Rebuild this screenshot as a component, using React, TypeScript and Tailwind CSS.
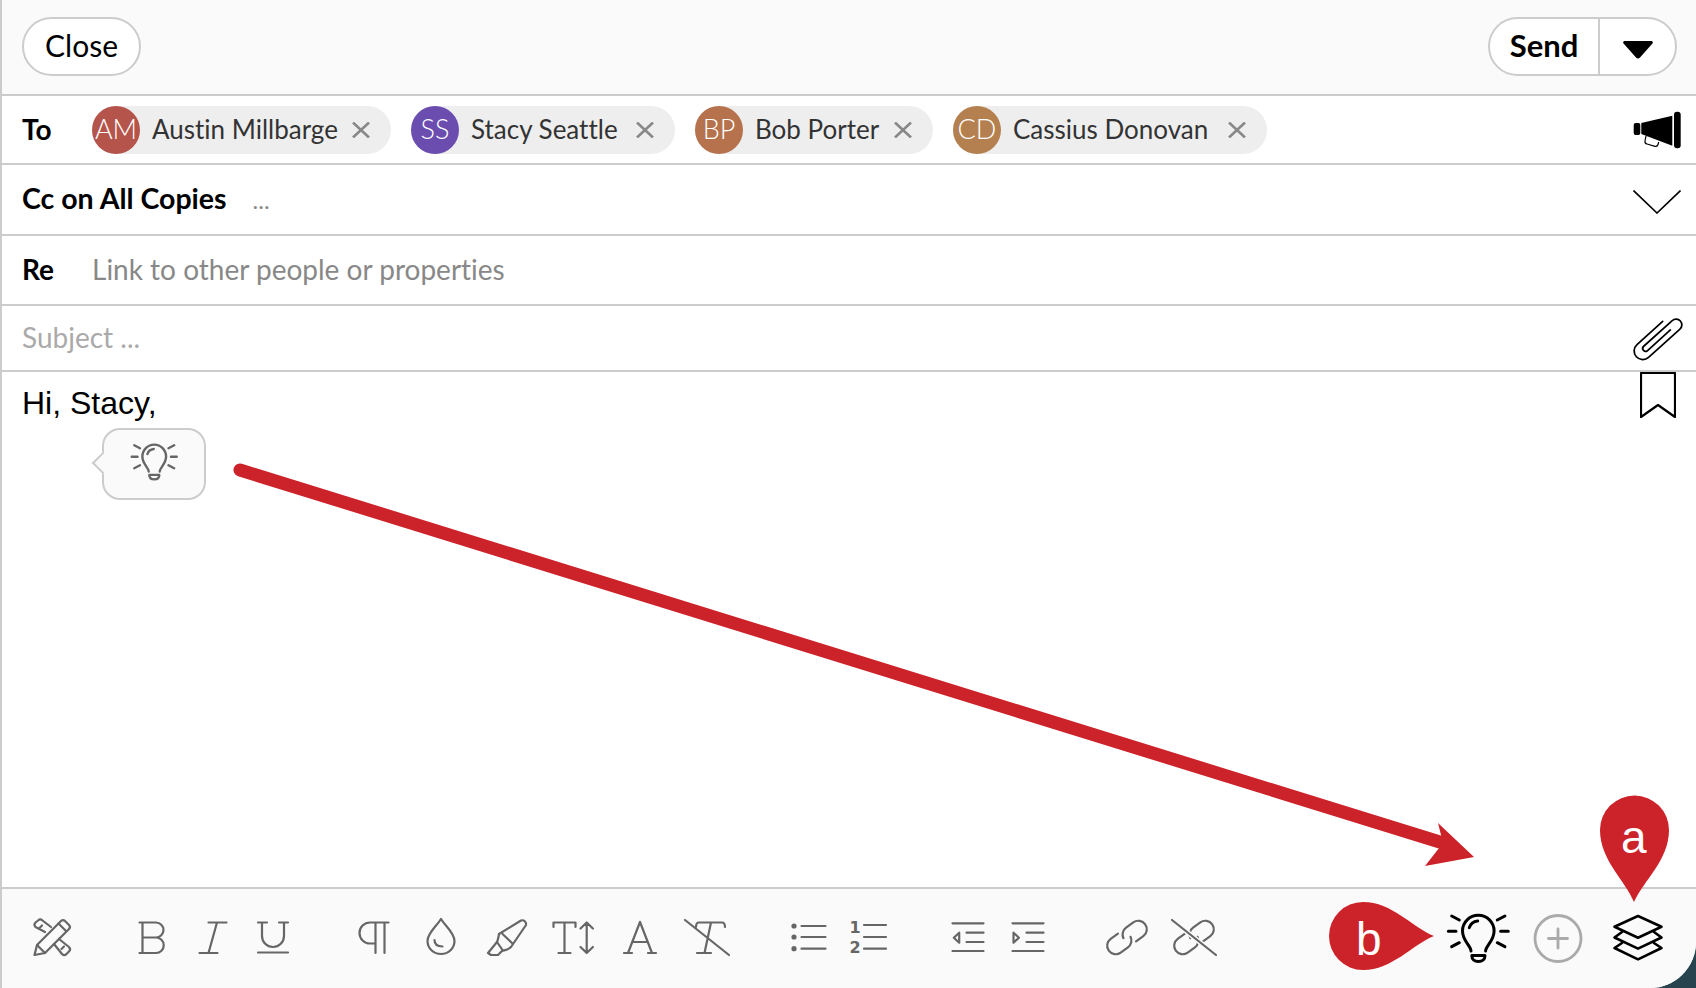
import type { ReactNode } from 'react';

const people = [
    { initials: 'AM', name: 'Austin Millbarge', color: 'bg-[#b5544b]', chip: 'w-[299px] mr-[20px]' },
    { initials: 'SS', name: 'Stacy Seattle', color: 'bg-[#6b4db0]', chip: 'w-[264px] mr-[20px]' },
    { initials: 'BP', name: 'Bob Porter', color: 'bg-[#b5724c]', chip: 'w-[238px] mr-[20px]' },
    { initials: 'CD', name: 'Cassius Donovan', color: 'bg-[#b5804f]', chip: 'w-[314px]' },
];

function Icon({ children, className = 'text-[#666666]', weight = '2.200' }: { children: ReactNode; className?: string; weight?: string }) {
    return (
        <svg
            viewBox="0 0 48 48"
            fill="none"
            stroke="currentColor"
            strokeWidth={weight}
            strokeLinecap="round"
            strokeLinejoin="round"
            className={`w-12 h-12 shrink-0 overflow-visible ${className}`}
        >
            {children}
        </svg>
    );
}

function Bulb({ className, weight = '3' }: { className: string; weight?: string }) {
    return (
        <svg
            viewBox="0 0 48 48"
            fill="none"
            stroke="currentColor"
            strokeWidth={weight}
            strokeLinecap="round"
            strokeLinejoin="round"
            className={`shrink-0 overflow-visible ${className}`}
        >
            <path d="M17 38c0-5-8.500-10-8.500-20a15.800 15.800 0 0 1 31.600 0c0 10-8.500 15-8.500 20" />
            <path d="M15.300 14.700c1-3.500 4.200-6.200 8.400-6.700" />
            <path d="M17.800 42.500h13.200c0 3.500-2.500 6-6.600 6s-6.600-2.500-6.600-6z" />
            <path d="M-5.700 18.300H2M-2.300 3l7.600 4M-2.300 33.700l7.600-4M54.300 18.300H46.600M50.900 3l-7.600 4M50.900 33.700l-7.600-4" />
        </svg>
    );
}

function LinkShape() {
    return (
        <g transform="rotate(-36 24 24.500)">
            <path d="M19 16H10a8.500 8.500 0 0 0 0 17h9a8.500 8.500 0 0 0 8.300-7" />
            <path d="M20.700 23a8.500 8.500 0 0 1 8.300-7h9a8.500 8.500 0 0 1 0 17h-9" />
        </g>
    );
}

export default function App() {
    return (
        <div className="relative w-[1696px] h-[988px] overflow-hidden bg-[#27434e] font-['Lato',sans-serif] [font-variant-ligatures:none] text-black">
            <div className="flex flex-col h-full bg-white border-l-2 border-[#cccccc] rounded-br-[46px] overflow-hidden">
                {/* top bar */}
                <div className="flex items-center justify-between h-[96px] shrink-0 pl-[20px] pr-[19px] pb-[2px] bg-[#fafafa] border-b-2 border-[#cccccc]">
                    <button className="w-[119px] h-[59px] pb-[2px] rounded-full bg-white border-2 border-[#cccccc] text-[30px]">
                        Close
                    </button>
                    <div className="flex h-[59px] w-[189px] rounded-full bg-white border-2 border-[#cccccc]">
                        <div className="flex items-center justify-center w-[110px] pb-[2px] border-r-2 border-[#cccccc] text-[31px] font-bold">
                            Send
                        </div>
                        <div className="flex flex-1 items-center justify-center pt-[8px]">
                            <svg viewBox="0 0 30 18" className="w-[30px] h-[18px]" fill="#000000">
                                <path d="M2 0h26c2 0 2.500 1.800 1 3L17 16.500c-1.200 1.300-2.800 1.300-4 0L1 3C-.5 1.800 0 0 2 0z" />
                            </svg>
                        </div>
                    </div>
                </div>

                {/* To */}
                <div className="flex items-center h-[69px] shrink-0 pl-[20px] pr-[15px] border-b-2 border-[#cccccc]">
                    <div className="w-[70px] pb-[2px] text-[28px] font-bold">To</div>
                    <div className="flex flex-1 items-center">
                        {people.map((p) => (
                            <div key={p.initials} className={`flex items-center h-[48px] rounded-full bg-[#eeeeee] ${p.chip}`}>
                                <div className={`flex items-center justify-center w-[48px] h-[48px] rounded-full text-white font-light text-[27px] ${p.color}`}>
                                    {p.initials}
                                </div>
                                <span className="ml-[12px] flex-1 text-[26px] text-[#333333] whitespace-nowrap">{p.name}</span>
                                <svg viewBox="0 0 18 16" className="w-[18px] h-[16px] mr-[21px]" fill="none" stroke="#888888" strokeWidth="2.600">
                                    <path d="M1 .5l16 15M17 .5l-16 15" />
                                </svg>
                            </div>
                        ))}
                    </div>
                    <svg viewBox="0 0 48 38" className="w-[48px] h-[38px] shrink-0" fill="#000000">
                        <rect x="0.700" y="12" width="6.600" height="12" rx="2" />
                        <path d="M8.300 12L39.300 4.700V34.700L8.300 23Z" />
                        <rect x="41" y="0.700" width="6.700" height="36.600" rx="3" />
                        <path d="M13 25l-1 5c-.4 2 .6 2.600 2 3l8 2.300c1.700.4 2.600-.3 3-1.800l.7-2.500" fill="none" stroke="#000000" strokeWidth="1.200" />
                    </svg>
                </div>

                {/* Cc */}
                <div className="flex items-center h-[71px] shrink-0 pl-[20px] pr-[15px] border-b-2 border-[#cccccc]">
                    <div className="pb-[2px] text-[28.500px] font-bold">Cc on All Copies</div>
                    <div className="flex-1 ml-[26px] text-[24px] text-[#888888]">...</div>
                    <svg viewBox="0 0 48 24" className="w-[48px] h-[24px] mt-[4px]" fill="none" stroke="#000000" strokeWidth="1.600">
                        <path d="M.5.5L24 23 47.500.5" />
                    </svg>
                </div>

                {/* Re */}
                <div className="flex items-center h-[70px] shrink-0 pl-[20px] border-b-2 border-[#cccccc]">
                    <div className="w-[70px] pb-[2px] text-[28px] font-bold">Re</div>
                    <div className="pb-[2px] text-[28px] text-[#888888]">Link to other people or properties</div>
                </div>

                {/* Subject */}
                <div className="flex items-center h-[66px] shrink-0 pl-[20px] pr-[14px] border-b-2 border-[#cccccc]">
                    <div className="flex-1 pb-[2px] text-[28px] text-[#aaaaaa]">Subject ...</div>
                    <svg viewBox="0 0 48 44" className="w-[48px] h-[44px] overflow-visible" fill="none" stroke="#000000" strokeWidth="1.800" strokeLinecap="round">
                        <g transform="translate(25 21) rotate(-42) translate(-31 -12) scale(.96)">
                            <path d="M46 15H14a3 3 0 0 1 0-6H54a6 6 0 0 1 0 12H10a9 9 0 0 1 0-18H46" />
                        </g>
                    </svg>
                </div>

                {/* body */}
                <div className="relative flex flex-1 justify-between pl-[20px] pr-[20px]">
                    <div className="pt-[13px] font-['Liberation_Sans',Arial,sans-serif] text-[32px] leading-[36px]">Hi, Stacy,</div>
                    <svg viewBox="0 0 36 46" className="w-[36px] h-[46px]" fill="none" stroke="#000000" strokeWidth="2.200" strokeLinejoin="round">
                        <path d="M1 1H35V45L18 33 1 45Z" />
                    </svg>
                    {/* suggestion bubble */}
                    <div className="absolute left-[100px] top-[56px] flex justify-center pt-[13px] w-[104px] h-[72px] rounded-[18px] bg-[#fafafa] border-2 border-[#cccccc] text-[#666666]">
                        <div className="absolute left-[-9px] top-[25px] w-[16px] h-[16px] rotate-45 bg-[#fafafa] border-l-2 border-b-2 border-[#cccccc]" />
                        <Bulb className="relative w-[36px] h-[36px]" weight="3.200" />
                    </div>
                </div>

                {/* toolbar */}
                <div className="flex items-center h-[101px] shrink-0 pl-[26px] pb-[4px] bg-[#fafafa] border-t-2 border-[#cccccc]">
                    <Icon>
                        <path d="M6.500 42L9 32 33 8c1.300-1.300 2.700-1.300 4 0l4 4c1.300 1.300 1.300 2.700 0 4L17 40Z" />
                        <path d="M9 32l8 8M30.500 10.500l7.500 7.500" />
                        <path d="M17 19L7.500 14c-1.500-1.500-1.500-3 0-4.500L10 7.500c1.500-1.500 3-1.500 4.500 0L23 14M11.500 15l2.500-2.500" />
                        <path d="M31 26l10 8c1.500 1.500 1.500 3 0 4.500l-2.500 2.500c-1.500 1.500-3 1.500-4.500 0L26 31M33.500 36l2.500-2.500" />
                    </Icon>
                    <div className="flex gap-[12px] ml-[53px]">
                        <Icon>
                            <path d="M10.500 9.500H27a7.500 7.500 0 0 1 0 15H13.500M27 24.500a7.750 7.750 0 0 1 0 15.500H10.500M13.500 9.500V40" />
                        </Icon>
                        <Icon>
                            <path d="M19.500 9.500h18M10.500 40h18M28 9.500L19.500 40" />
                        </Icon>
                        <Icon>
                            <path d="M9 9.500h9M30 9.500h9M13 9.500V23a11 11 0 0 0 22 0V9.500M9 39.500h30" />
                        </Icon>
                    </div>
                    <div className="flex gap-[18.600px] ml-[53px]">
                        <Icon>
                            <path d="M38.500 9.500H20a10.500 10.500 0 0 0 0 21h5.500M25.500 9.500V40M34.500 9.500V40" />
                        </Icon>
                        <Icon>
                            <path d="M24 6c-5 8-13.500 14-13.500 22a13.500 13 0 0 0 27 0C37.500 20 29 14 24 6Z" />
                            <path d="M17.500 27c0 4 3 6.500 8 6.500" />
                        </Icon>
                        <Icon>
                            <path d="M38 7.500L16 21c-.5 3-1 6-2 8L5 40l3 2h7l4-4c3-1 6-1 9-4L43 12c.5-3-2-5.500-5-4.500Z" />
                            <path d="M19.500 21l9.500 9M14 29l5.500 8" />
                        </Icon>
                        <Icon>
                            <path d="M3.500 14V9.500h22V14M14.500 9.500V40M8.500 40h12M36.700 9.500V40M30.500 15.500l6.200-6 6.200 6M30.500 34l6.200 6 6.200-6" />
                        </Icon>
                        <Icon>
                            <path d="M24 9L12 40M24 9l12 31M8 40h8M32 40h8M16 29h16" />
                        </Icon>
                        <Icon>
                            <path d="M13 14c0-3 1-4.500 3-4.500h23c2 0 3 1.500 3 4.500M28 9.500L21.500 40M14 40h14M2 7l44 35" />
                        </Icon>
                    </div>
                    <div className="flex gap-[11px] ml-[54px]">
                        <Icon>
                            <path d="M16.500 13h24M16.500 24h24M16.500 35.700h24" />
                            <circle cx="9" cy="13" r="1.500" fill="currentColor" />
                            <circle cx="9" cy="24" r="1.500" fill="currentColor" />
                            <circle cx="9" cy="35.700" r="1.500" fill="currentColor" />
                        </Icon>
                        <Icon>
                            <path d="M20 12h22M20 24h22M20 35.700h22" />
                            <text x="11" y="20" textAnchor="middle" fontSize="16" fontWeight="700" fontFamily="'DejaVu Sans',sans-serif" fill="currentColor" stroke="none">1</text>
                            <text x="11" y="40" textAnchor="middle" fontSize="16" fontWeight="700" fontFamily="'DejaVu Sans',sans-serif" fill="currentColor" stroke="none">2</text>
                        </Icon>
                    </div>
                    <div className="flex gap-[12px] ml-[52px]">
                        <Icon>
                            <path d="M8.500 10.300h31M8.500 38h31M22.500 19.700h17M22.500 29h17" />
                            <path d="M15.200 19.700l-5.400 5 5.400 5Z" />
                        </Icon>
                        <Icon>
                            <path d="M8.500 10.300h31M8.500 38h31M22.500 19.700h17M22.500 29h17" />
                            <path d="M9.500 19.700l5.400 5-5.400 5Z" />
                        </Icon>
                    </div>
                    <div className="flex gap-[19px] ml-[51px]">
                        <Icon>
                            <LinkShape />
                        </Icon>
                        <Icon>
                            <LinkShape />
                            <path d="M2 7l44 35" stroke="#fafafa" strokeWidth="5" />
                            <path d="M2 7l44 35" />
                        </Icon>
                    </div>
                    <div className="flex items-center gap-[32px] ml-auto mr-[34px]">
                        <Bulb className="w-12 h-12 text-black" />
                        <Icon className="text-[#aaaaaa]" weight="2.800">
                            <circle cx="24" cy="25.500" r="23" />
                            <path d="M24 16v19M14.500 25.500h19" />
                        </Icon>
                        <Icon className="text-black" weight="2.600">
                            <path d="M24 3L47.500 13.700 24 24.700.5 13.700Z" />
                            <path d="M8 19L.5 24.500 24 35.700 47.500 24.500 40 19" />
                            <path d="M8 30L.5 35 24 46.300 47.500 35 40 30" />
                        </Icon>
                    </div>
                </div>
            </div>

            {/* red annotations drawn over the screenshot */}
            <svg viewBox="0 0 1696 988" className="absolute inset-0 w-[1696px] h-[988px] pointer-events-none">
                <path d="M240 470L1443 843" stroke="#cc2229" strokeWidth="13" strokeLinecap="round" />
                <path d="M1438 823L1474 857 1425 866 1443 843Z" fill="#cc2229" />
                <path d="M1634 902C1625 880 1600 860 1600 830a34.500 34.500 0 0 1 69 0C1669 860 1644 880 1634 902Z" fill="#cc2229" />
                <path d="M1434 936C1412 945 1392 970 1363 970a34 34 0 0 1 0-68C1392 902 1412 927 1434 936Z" fill="#cc2229" />
            </svg>
            <span className="absolute left-[1621px] top-[812px] font-['Liberation_Sans',Arial,sans-serif] text-[46px] leading-[50px] text-white">a</span>
            <span className="absolute left-[1356px] top-[914px] font-['Liberation_Sans',Arial,sans-serif] text-[46px] leading-[50px] text-white">b</span>
        </div>
    );
}
